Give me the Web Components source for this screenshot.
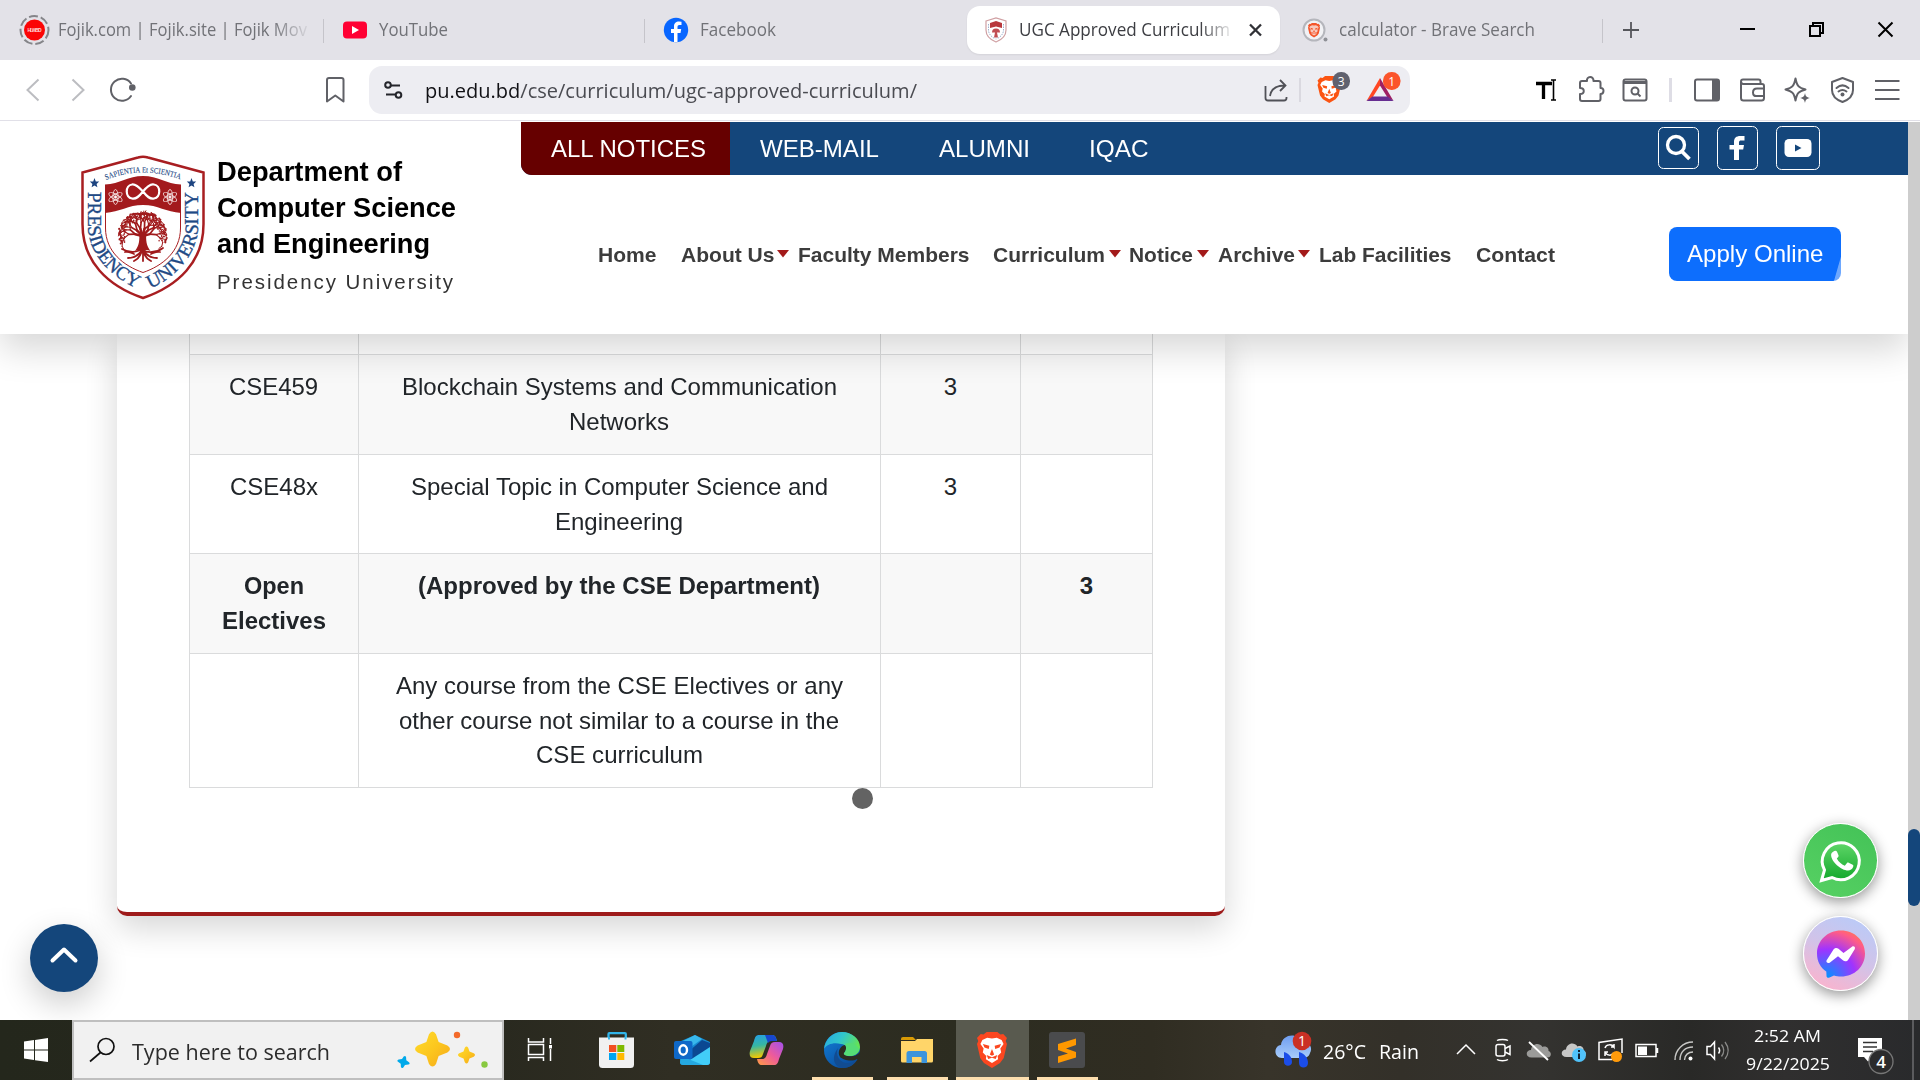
<!DOCTYPE html>
<html lang="en">
<head>
<meta charset="utf-8">
<title>UGC Approved Curriculum</title>
<style>
html,body{margin:0;width:1920px;height:1080px;overflow:hidden;background:#fff}
</style>
</head>
<body>
<desktop-screen></desktop-screen>
<script>
const UI = '"Open Sans","Noto Sans",sans-serif';
const BASE = `*{box-sizing:border-box}:host{display:block}svg{display:block;overflow:visible}.row{display:flex;align-items:center}.row>*{flex:none}`;

class Base extends HTMLElement {
  connectedCallback() {
    if (this.shadowRoot) return;
    this.attachShadow({ mode: 'open' }).innerHTML = `<style>${BASE}${this.css()}</style>${this.html()}`;
  }
  css() { return ''; }
  html() { return '<slot></slot>'; }
}
const define = (n, css, html) => customElements.define(n, class extends Base { css() { return css; } html() { return html(); } });

/* One line of text condensed or widened to a set width */
customElements.define('fit-text', class extends HTMLElement {
  connectedCallback() {
    if (this.shadowRoot) return;
    const w = +this.getAttribute('w');
    const r = this.attachShadow({ mode: 'open' });
    r.innerHTML = `<style>:host{display:block;white-space:nowrap;width:${w}px}span{display:inline-block;transform-origin:0 50%}</style><span><slot></slot></span>`;
    const s = r.querySelector('span');
    s.style.transform = `scaleX(${w / s.getBoundingClientRect().width})`;
  }
});

/* Row helpers: each item is [start, width, markup]; gaps become margins */
const row = (start, items) => { let c = start; return items.map(([x, w, m]) => { const g = x - c; c = x + w; return `<div style="margin-left:${g}px;width:${w}px">${m}</div>`; }).join(''); };
const icons = (top, h) => (x, w, inner, attr = '') => [x, w, `<svg width="${w}" height="${h}" viewBox="${x} ${top} ${w} ${h}" fill="none" ${attr}>${inner}</svg>`];
const text = (x, w, t, style = '') => [x, w, `<fit-text w="${w}" style="${style}">${t}</fit-text>`];

const LION = (c1, face) => `<path d="M6 2.5 9 0h10l3 2.5 2.5-.4L28 6l-1.2 3L28 12l-3 14-3.500 5L14 36l-7.500-5L3 26 0 12l1.200-3L0 6l3.500-3.900Z" fill="${c1}"/><path d="M14 6.500 18.500 5.800 23 8l1.800 4-3 4.500.8 4-3.300 3.500.4 3.200L14 31l-5.700-3.800.4-3.200-3.300-3.500.8-4-3-4.500L5 8l4.500-2.200Z" fill="${face}"/><path d="m5.500 12 6 1.800L11 17l-4-1.500ZM22.500 12l-6 1.800.5 3.200 4-1.500ZM14 17l-2 5.500 2 1.200 2-1.200ZM9 23l5 2.200 5-2.200-1.500 4L14 25.800 10.500 27Z" fill="${c1}"/>`;
const SHIELDLET = (x, y, s) => `<g transform="translate(${x} ${y}) scale(${s})"><path d="M0 3 10 0 20 3v9c0 6-5 10-10 12C5 22 0 18 0 12Z" fill="#fff" stroke="#d0a0a3" stroke-width="1.200"/><path d="M4 5l6-2 6 2v5l-6-1.500L4 10Z" fill="#b8383d"/><path d="M10 10.500a4 4 0 0 1 4 4h-3l1 5H8l1-5H6a4 4 0 0 1 4-4Z" fill="#c04e54"/><path d="M2.500 6v6c0 4 3 7 7 9" stroke="#9fb1cf" stroke-width="1" stroke-dasharray="1.500 1"/><path d="M17.500 6v6c0 4-3 7-7 9" stroke="#9fb1cf" stroke-width="1" stroke-dasharray="1.500 1"/></g>`;

/* ---------- browser tabs ---------- */
define('tab-strip', `:host{height:60px;background:#e3e2e8;font:18px ${UI};color:#717277}.row{height:60px}fit-text{margin-top:-2px}
.active{height:48px;width:313px;background:#fff;border-radius:13px;color:#3c3d42;box-shadow:0 1px 2px #0001;display:flex;align-items:center}.active>*{flex:none}`, () => {
  const ic = icons(0, 60), ia = icons(6, 48);
  const sep = x => ic(x, 1, `<path d="M${x + .5} 19v24" stroke="#c5c4ca"/>`);
  const fade = '-webkit-mask-image:linear-gradient(90deg,#000 86%,#0002);mask-image:linear-gradient(90deg,#000 86%,#0002)';
  const left = row(0, [
    ic(19, 31, `<circle cx="34.500" cy="30" r="14" stroke="#858589" stroke-width="2" stroke-dasharray="9 3"/><circle cx="34.500" cy="30" r="10.500" fill="#fb0505"/><text x="27.500" y="32" font-size="5" font-weight="700" fill="#ffd5d5" font-family="Liberation Sans" textLength="14">HLWBD</text>`),
    text(58, 249, 'Fojik.com | Fojik.site | Fojik Mov', fade),
    sep(323),
    ic(343, 24, `<rect x="343" y="21.500" width="24" height="17" rx="4" fill="#ff0033"/><path d="m352 26 7 4-7 4Z" fill="#fff"/>`),
    text(379, 69, 'YouTube'), sep(644),
    ic(664, 25, `<circle cx="676" cy="30" r="12.200" fill="#0866ff"/><path d="M674 42v-9h-3v-4h3v-2.500c0-3.500 2-5 5-5l2.500.2v3.300h-2c-1.500 0-2 .8-2 2V29h3.700l-.7 4h-3v9Z" fill="#fff"/>`),
    text(700, 76, 'Facebook')]);
  const act = row(967, [ia(986, 20, SHIELDLET(986, 18, 1)), text(1019, 211, 'UGC Approved Curriculum', fade), ia(1248, 16, `<path d="m1250 24.500 11 11m0-11-11 11" stroke="#303136" stroke-width="2.300"/>`)]);
  const right = row(1280, [
    ic(1302, 26, `<circle cx="1314" cy="30" r="10.500" fill="#f2f2f5" stroke="#b5b6bc" stroke-width="2"/><circle cx="1325.500" cy="39.500" r="2" fill="#8f9096"/><g transform="translate(1308 23) scale(.43 .4)">${LION('#f4552a', '#f8c9bd')}</g>`),
    text(1339, 196, 'calculator - Brave Search'), sep(1602),
    ic(1622, 18, `<path d="M1631 22v16m-8-8h16" stroke="#55565b" stroke-width="1.800"/>`),
    ic(1739, 17, `<path d="M1740 29h15" stroke="#000" stroke-width="2"/>`),
    ic(1808, 18, `<path d="M1810 26h10v10h-10zM1813 26v-3h10v10h-3" stroke="#000" stroke-width="2"/>`),
    ic(1877, 18, `<path d="m1878.500 22.500 14 14m0-14-14 14" stroke="#000" stroke-width="2"/>`)]);
  return `<div class="row">${left}<div class="active" style="margin-left:191px">${act}</div>${right}</div>`;
});

/* ---------- browser toolbar ---------- */
define('tool-bar', `:host{height:62px;background:#fff;border-bottom:1px solid #fff;font:20px ${UI};color:#4a4b51;box-shadow:inset 0 -1px #e1e0e8}.row{height:60px}.url{height:48px;width:1041px;background:#ededf2;border-radius:13px;display:flex;align-items:center;margin-left:24px}.url>*{flex:none}b{font-weight:400;color:#101014}`, () => {
  const ic = icons(60, 60), iu = icons(66, 48), g = 'stroke="#606167" stroke-width="2" stroke-linecap="round" stroke-linejoin="round"';
  const left = row(0, [
    ic(26, 14, '<path d="M38.500 79.500 27.500 90l11 10.500" stroke="#bcbdc1" stroke-width="2"/>'),
    ic(71, 14, '<path d="m72.500 79.500 11 10.500-11 10.500" stroke="#bcbdc1" stroke-width="2"/>'),
    ic(110, 26, `<path d="M131 83.500A11 11 0 1 0 131 96" ${g} stroke-width="2.200"/><circle cx="132.300" cy="87.500" r="3.300" fill="#606167"/>`),
    ic(325, 20, `<path d="M327 80q0-2 2-2h12.500q2 0 2 2v21.500l-8.200-6-8.300 6Z" ${g}/>`)]);
  const url = row(369, [
    iu(384, 20, '<g stroke="#24252b" stroke-width="2"><circle cx="388" cy="85" r="2.800"/><path d="M391 85.500h9M386 94.500h9"/><circle cx="398.500" cy="95" r="2.800"/></g>'),
    text(425, 492, '<b>pu.edu.bd</b>/cse/curriculum/ugc-approved-curriculum/'),
    iu(1264, 24, `<path d="M1265.500 86v12q0 2.500 2.500 2.500h16q2.500 0 2.500-2.500v-1M1270 96c1-7 6-10.500 15-10.500m-5-5.500 5.500 5.500-5.500 5.500" stroke="#505157" stroke-width="1.800"/>`),
    iu(1299, 2, '<path d="M1300 78v24" stroke="#cfced6" stroke-width="1.300"/>'),
    iu(1317, 34, `<g transform="translate(1317.500 76) scale(.84 .75)">${LION('#fb5412', '#fff')}</g><rect x="1332.500" y="72" width="17.500" height="18" rx="8.500" fill="#60616e"/><text x="1341.200" y="85.500" font-size="12" fill="#fff" text-anchor="middle" font-family="Open Sans">3</text>`),
    iu(1366, 35, '<path d="m1380 78-13.500 23 6-3.500 7.500-12Z" fill="#ff4724"/><path d="m1380 78 13.500 23-6-3.500-7.500-12Z" fill="#9e1f63"/><path d="M1366.500 101h27l-6-4.500h-15Z" fill="#662d91"/><rect x="1383" y="72" width="17.500" height="18" rx="8.500" fill="#fb542b"/><text x="1391.700" y="85.500" font-size="12" fill="#fff" text-anchor="middle" font-family="Open Sans">1</text>')]);
  const right = row(1410, [
    ic(1535, 22, '<path d="M1536 83.500h16M1543.500 83v16" stroke="#000" stroke-width="3.300"/><path d="M1553.500 80v20m-2.500-20h5m-5 20h5" stroke="#000" stroke-width="1.600"/>'),
    ic(1578, 26, `<path d="M1580 83q0-2 2-2h5c-1-5 7-5.500 6.500 0h5q2 0 2 2v5c4-.500 4 6 0 6v5q0 2-2 2h-16.500q-2 0-2-2v-5c5 0 5-6 0-6Z" ${g}/>`),
    ic(1622, 26, `<rect x="1623.500" y="79.500" width="23" height="21" rx="2" ${g}/><path d="M1623 82.500h24" stroke="#606167" stroke-width="3"/><circle cx="1635" cy="91" r="3.500" stroke="#606167" stroke-width="2"/><path d="m1637.500 93.500 3 3" stroke="#606167" stroke-width="2"/>`),
    ic(1669, 3, '<path d="M1670.500 78v24" stroke="#dedde5" stroke-width="3"/>'),
    ic(1694, 26, `<rect x="1695" y="79.500" width="24" height="21" rx="2" ${g}/><path d="M1712 79h7v22h-7Z" fill="#606167"/>`),
    ic(1739, 27, `<path d="M1741 82v16q0 2.500 2.500 2.500h18q2.500 0 2.500-2.500V86q0-2-2-2h-19q-2-.5-2-2.500 0-2 2-2h15.500q2 0 2 2V84M1764 88.500h-7q-4 0-4 4t4 3.500h7" ${g}/>`),
    ic(1784, 28, `<path d="M1795.500 78.500c1.500 7.500 3 9 10 11-7 2-8.500 3.500-10 11-1.500-7.500-3-9-10-11 7-2 8.500-3.500 10-11Z" ${g}/><path d="M1805 93c.8 3.500 1.500 4.200 5 5-3.500.8-4.200 1.500-5 5-.8-3.500-1.500-4.200-5-5 3.500-.8 4.200-1.500 5-5Z" fill="#606167"/>`),
    ic(1830, 25, `<path d="m1842.500 78 10.500 4v8c0 6-5 10-10.500 12-5.500-2-10.500-6-10.500-12v-8Z" ${g}/><path d="M1836.500 88c4-3.500 8-3.500 12 0M1838.500 91.500c2.800-2.200 5.200-2.200 8 0" ${g} stroke-width="1.800"/><circle cx="1842.500" cy="94.500" r="2" fill="#606167"/>`),
    ic(1874, 26, `<path d="M1875 81h24.500m-24.500 9h24.500m-24.500 9h24.500" stroke="#606167" stroke-width="2"/>`)]);
  return `<div class="row">${left}<div class="url">${url}</div>${right}</div>`;
});

/* ---------- university crest ---------- */
function tree() {
  let s = 7; const rnd = () => (s = (s * 16807) % 2147483647) / 2147483647;
  let out = '';
  const grow = (x, y, a, len, w, d) => {
    const nx = x + Math.cos(a) * len, ny = y + Math.sin(a) * len;
    if (Math.hypot(nx - 142.500, ny - 235) > 24.500) return;
    out += `<path d="M${x.toFixed(1)} ${y.toFixed(1)}L${nx.toFixed(1)} ${ny.toFixed(1)}" stroke-width="${w}"/>`;
    if (d > 0) { grow(nx, ny, a - .25 - rnd() * .5, len * .86, Math.max(1, w * .68), d - 1); grow(nx, ny, a + .25 + rnd() * .5, len * .86, Math.max(1, w * .68), d - 1); }
  };
  [-2.900, -2.350, -1.850, -1.300, -.800, -.250].forEach(a => grow(142.500, 236, a, 7.500, 2.500, 5));
  let leaves = '';
  for (let ring = 0; ring < 2; ring++) for (let i = 0; i < 60; i++) { const a = Math.PI * (.9 + i / 60 * 1.200), r = (ring ? 17 : 21) + rnd() * 3.500; leaves += `<circle cx="${(142.500 + Math.cos(a) * r).toFixed(1)}" cy="${(236.500 + Math.sin(a) * r).toFixed(1)}" r="${ring ? .8 : 1.100}"/>`; }
  return `<g stroke="#a01a1c" stroke-linecap="round" fill="none">${out}<path d="M142 248c-4 5-13 5-20 1m20 1c-3 5-8 8-14 8m14-8c-1 5-4 9-8 11m9-11v11m0-11c1 5 4 9 8 11m-8-11c3 5 8 8 14 8m-14-8c4 3 13 3 20-2M134 254c-3-1-5-3-9-2m26 2c3-1 5-3 9-2" stroke-width="1.800"/></g><g fill="#a01a1c">${leaves}</g><path d="M139 232h7.500c-1 8 0 14 4 19-5-2-6-1-7.500 1-1-2-2-3-8-1 4-5 5-11 4-19Z" fill="#a01a1c"/>`;
}
const atom = (x, y) => `<g stroke="#f3dcdc" stroke-width=".9" transform="translate(${x} ${y})"><ellipse rx="7.500" ry="2.600" transform="rotate(90)"/><ellipse rx="7.500" ry="2.600" transform="rotate(30)"/><ellipse rx="7.500" ry="2.600" transform="rotate(150)"/><circle r="1.200" fill="#fff"/></g>`;
const star = (x, y) => `<path transform="translate(${x} ${y})" d="m0-5 1.300 3.400 3.400.2-2.600 2.300.8 3.400L0 2.600l-2.900 1.700.8-3.400-2.600-2.300 3.400-.2Z" fill="#1d4480"/>`;
define('uni-crest', ':host{width:124px;height:212px}', () => `<svg width="124" height="212" viewBox="81 122 124 212" fill="none">
<path d="M138 157.500Q143 156 148 157.500L203.500 172.500V224C203.500 262 178 286 143 298 108 286 82.500 262 82.500 224V172.500Z" fill="#fff" stroke="#a81e21" stroke-width="2.500"/>
<path d="M105.500 187V228C105.500 252 124 266 143 272.500 162 266 180.500 252 180.500 228V187" stroke="#a81e21" stroke-width="1"/>
<path d="M105 184.500C120 184 128 176 143 176S166 184 181 184.500V213C166 212 158 205 143 205S120 212 105 213Z" fill="#a31a1d"/>
<path d="M143 191.500C137 185 134 184 132 184.500c-7 1-7 13 0 14 4 1 7-2 11-7s8-8 11-7c7 1 7 13 0 14-4 1-7-2-11-7Z" stroke="#fff" stroke-width="2.200"/>
${atom(115.500, 197)}${atom(170, 197)}${star(94.500, 183)}${star(191.500, 183)}${tree()}
<path id="a" d="M87.500 192V222C87.500 252 108 277 141 290"/><path id="b" d="M150 288.500C178 277 198.500 252 198.500 222V191"/><path id="c" d="M106 180Q124 172.500 143 172.500T182 180"/>
<g font-family="Liberation Serif" fill="#1f4a85" stroke="#1f4a85" stroke-width=".35"><text font-size="19" lengthAdjust="spacingAndGlyphs" textLength="117"><textPath href="#a" lengthAdjust="spacingAndGlyphs" textLength="117">PRESIDENCY</textPath></text><text font-size="19" lengthAdjust="spacingAndGlyphs" textLength="117"><textPath href="#b" lengthAdjust="spacingAndGlyphs" textLength="117">UNIVERSITY</textPath></text><text font-size="8" stroke-width=".1" lengthAdjust="spacingAndGlyphs" textLength="76"><textPath href="#c" lengthAdjust="spacingAndGlyphs" textLength="76">SAPIENTIA Et SCIENTIA</textPath></text></g></svg>`);

/* ---------- site header ---------- */
define('site-header', `:host{display:flex;width:1908px;height:212px;background:#fff;position:relative;z-index:2;box-shadow:0 15px 34px rgba(0,0,0,.16);font-family:"Liberation Sans",Arial,sans-serif}
.brand{width:521px;padding-left:81px;display:flex;flex:none}.name{margin:32px 0 0 12.400px;color:#000;font:700 28px/36px "Liberation Sans"}.name .sub{font-weight:400;font-size:21px;letter-spacing:2px;color:#333;margin-top:2px}
.right{flex:none;width:1387px}.top{height:53px;background:#14467b;border-bottom-left-radius:11px;overflow:hidden;font-size:24px;color:#fff}.all{width:209px;height:53px;background:#660000;padding-left:30px;display:flex;align-items:center}
.nav{height:159px;font-weight:700;font-size:21px;color:#3c3c3c}.apply{width:172px;height:54px;margin-top:-1.500px;border-radius:8px;background:linear-gradient(106deg,#0d6efd 96%,#6ea8fe 96.500%);display:flex;align-items:center;padding-left:18px;color:#fff;font-weight:400;font-size:24px}`, () => {
  const ic = icons(122, 53), ar = icons(175, 159);
  const c = x => ar(x, 12, `<path d="M${x} 250h12l-6 7.500Z" fill="#a31a1a"/>`);
  const box = (x, y, w, h) => `<rect x="${x}.5" y="${y}.5" width="${w}" height="${h}" rx="5" stroke="#fff"/>`;
  return `<div class="brand"><uni-crest></uni-crest><div class="name"><fit-text w="185">Department of</fit-text><fit-text w="239">Computer Science</fit-text><fit-text w="213">and Engineering</fit-text><fit-text w="238" class="sub">Presidency University</fit-text></div></div>
<div class="right"><div class="row top"><div class="all"><fit-text w="155">ALL NOTICES</fit-text></div>${row(730, [
    text(760, 119, 'WEB-MAIL'), text(939, 91, 'ALUMNI'), text(1089, 59.500, 'IQAC'),
    ic(1658, 42, box(1658, 127, 40, 41) + '<circle cx="1676" cy="145" r="8.500" stroke="#fff" stroke-width="3.300"/><path d="m1682 151.500 7.500 7.500" stroke="#fff" stroke-width="3.800"/>'),
    ic(1717, 42, box(1717, 126, 40, 43) + '<path d="M1734 160v-10.500h-4.500V145h4.500v-3c0-4 2-6 6.500-6h4v4.500h-3c-2 0-2.500.5-2.500 2.500v2h5l-.8 4.500h-4.200V160Z" fill="#fff"/>'),
    ic(1776, 44, box(1776, 126, 43, 43) + '<rect x="1784.500" y="139" width="27" height="18" rx="4.500" fill="#fff"/><path d="m1795 144.500 6.500 3.500-6.500 3.500Z" fill="#14467b"/>')])}</div>
<div class="row nav">${row(521, [text(598, 58.500, 'Home'), text(680.600, 93.500, 'About Us'), c(777), text(798, 171.500, 'Faculty Members'), text(993.500, 112, 'Curriculum'), c(1109), text(1129.500, 64, 'Notice'), c(1197), text(1217.600, 77, 'Archive'), c(1298), text(1319, 132.500, 'Lab Facilities'), text(1475.600, 79, 'Contact'),
    [1669, 172, '<div class="apply"><fit-text w="136.500">Apply Online</fit-text></div>']])}</div></div>`;
});

/* ---------- curriculum table ---------- */
define('course-table', `:host{display:block;width:964px;font:24px/34.500px "Liberation Sans",Arial,sans-serif;color:#212529}fit-text{margin-left:-1px}
.r{display:grid;grid-template-columns:169px 522px 140px 132px;border-left:1px solid #dadbdc;text-align:center}.r>div{border-right:1px solid #dadbdc;border-bottom:1px solid #dadbdc;padding-top:15px;display:flex;flex-direction:column;align-items:center}.s{background:#f8f8f8}.b{font-weight:700}`, () => {
  const rows = [[21, '', '', '', '', ''], [100, 's', [['CSE459', 89]], [['Blockchain Systems and Communication', 435], ['Networks', 100]], '3', ''],
    [99, '', [['CSE48x', 88]], [['Special Topic in Computer Science and', 417], ['Engineering', 128]], '3', ''],
    [100, 's b', [['Open', 60], ['Electives', 104]], [['(Approved by the CSE Department)', 402]], '', '3'],
    [134, '', '', [['Any course from the CSE Electives or any', 447], ['other course not similar to a course in the', 440], ['CSE curriculum', 167]], '', '']];
  const f = a => a ? a.map(([t, w]) => `<fit-text w="${w}">${t}</fit-text>`).join('') : '';
  return rows.map(([h, c, a, b, d, e]) => `<div class="r ${c}" style="height:${h}px"><div>${f(a)}</div><div>${f(b)}</div><div>${d}</div><div>${e}</div></div>`).join('');
});
define('content-card', `:host{width:1108px;height:582px;margin-left:117px;padding-left:72px;background:#fff;border-bottom:4px solid #9e1b1b;border-radius:0 0 10px 10px;box-shadow:0 12px 32px rgba(0,0,0,.165)}`, () => '<slot></slot>');

define('round-button', `:host{position:absolute;border-radius:50%;z-index:3}`, () => '<slot></slot>');

define('page-scrollbar', `:host{width:12px;height:898px;background:#cdcdcd;padding-top:707px;position:relative;z-index:3}div{height:77px;background:#14467b;border-radius:6px}`, () => '<div></div>');

define('web-page', `:host{display:flex;height:898px;width:1920px;position:relative;overflow:hidden;background:#fff}.view{width:1908px;height:898px;overflow:hidden}`, () => `<div class="view"><site-header></site-header><content-card><course-table></course-table></content-card></div><page-scrollbar></page-scrollbar>
<round-button style="left:30px;top:802px;width:68px;height:68px;background:#14467b;box-shadow:0 12px 32px rgba(0,0,0,.2)"><svg width="68" height="68" fill="none"><path d="m22.500 36.500 11.500-11 11.500 11" stroke="#fff" stroke-width="4" stroke-linecap="round" stroke-linejoin="round"/></svg></round-button>
<round-button style="left:852.300px;top:666.300px;width:21px;height:21px;background:#636363"></round-button>
<round-button style="left:1803px;top:701px;width:75px;height:75px;border:1.500px solid #fff;background:linear-gradient(30deg,#57d163,#43c257);box-shadow:0 4px 14px rgba(0,0,0,.42)"><svg width="72" height="72" viewBox="0 0 72 72" fill="none"><defs><linearGradient id="w" x2="0" y2="1"><stop stop-color="#5fd668"/><stop offset="1" stop-color="#12a82c"/></linearGradient></defs><path d="M17.500 56.500 20.500 46A18.500 18.500 0 1 1 28 53.500Z" fill="url(#w)" stroke="#fff" stroke-width="3"/><path d="M29.500 27.500c1-1 3-1 3.500.2l1.500 3.500c.3 1-.2 1.700-1.700 3.300 2 3.500 4.500 5.700 8 7.200l2.200-2.700c.5-.6 1-.6 1.700-.3l4 2c.8.5.8 1 .4 2.300-.7 2.300-3 3.500-5 3.500-7 0-17-9-17-15.500 0-1.500.8-2.700 2.400-3.500Z" fill="#fff"/></svg></round-button>
<round-button style="left:1803px;top:794px;width:75px;height:75px;border:1.500px solid #fff;background:linear-gradient(25deg,#fbb3cd 8%,#d2c3e8 50%,#b5ccfb);box-shadow:0 4px 14px rgba(0,0,0,.42)"><svg width="72" height="72" viewBox="0 0 72 72" fill="none"><defs><radialGradient id="m" cx=".2" cy="1" r="1.100"><stop stop-color="#0095ff"/><stop offset=".55" stop-color="#a033ff"/><stop offset=".9" stop-color="#ff5c87"/><stop offset="1" stop-color="#ff7061"/></radialGradient></defs><path d="M37 13.500c13.500 0 24 10 24 23s-10.500 23-24 23c-2.500 0-5-.3-7-1l-4.500 2c-1.500.6-3 0-3-1.800l-.2-4.200C16.500 50.500 13 44.500 13 36.500c0-13 10.500-23 24-23Z" fill="url(#m)"/><path d="m22.500 43.500 7-11c1.200-1.800 3.400-2 5-.8l5 4.300 8.500-6.300c1.600-1 3.800.2 2.700 2.500l-6.500 10.500c-1.200 1.800-3.500 2-5 .8l-5.200-4.300-8 6.200c-1.800 1.200-4.200.2-3.500-1.900Z" fill="#fff"/></svg></round-button>`);

/* ---------- taskbar ---------- */
define('task-bar', `:host{height:60px;width:1920px;font:20px ${UI};color:#fff;background:linear-gradient(90deg,#24271c 0,#29291f 26%,#302e23 35%,#2c2c20 50%,#302d22 60%,#38342a 66%,#333029 73%,#343330 80%,#292927 88%,#302f2f 93%,#292a2c 100%)}.row{height:60px}
.search{width:432px;height:60px;border:2px solid #bfbfbf;background:#f1f1f1;margin-left:24px;display:flex;align-items:center;color:#2c2c2c;font-size:22px}.search>*{flex:none}.search fit-text{padding-top:1px}
.clock{font-size:17px;line-height:28px;display:flex;flex-direction:column;align-items:center}`, () => {
  const ic = icons(1020, 60), is = icons(1022, 56);
  const under = (x, w) => `<path d="M${x} 1078.500h${w}" stroke="#fddfae" stroke-width="3"/>`;
  const L = 'stroke="#fff" stroke-width="1.500"';
  const sp = (x, y, r, c) => `<path transform="translate(${x} ${y}) scale(${r})" d="M-.2-.85Q0-1.150.2-.85L.35-.4.85-.2Q1.150 0 .85.2L.35.4.2.85Q0 1.150-.2.85L-.35.4-.85.2Q-1.150 0-.85-.2L-.35-.4Z" fill="${c}"/>`;
  const cloud = (x, y, c) => `<path transform="translate(${x} ${y})" d="M5 16C-1.500 16-1 8.500 4.500 8.500 5 3 12 0 16 5.500 20 4 22.500 7 22 9.500c3.500 1 3 6.500-1 6.500Z" fill="${c}"/>`;
  return `<div class="row">${row(0, [ic(24, 24, '<path d="m24 1041.500 10-1.500v9.500H24ZM35 1040l13-2v11.500H35ZM24 1050.500h10v9.500l-10-1.500ZM35 1050.500h13v11.500l-13-1.800Z" fill="#fff"/>')])}
<div class="search">${row(74, [
    is(89, 26, '<circle cx="106" cy="1046.500" r="8" stroke="#111" stroke-width="1.700"/><path d="m100.500 1052.500-10.500 9" stroke="#111" stroke-width="1.700"/>'),
    text(132, 198, 'Type here to search'),
    is(396, 94, '<defs><linearGradient id="y" x2="1" y2="1"><stop stop-color="#ffdc2e"/><stop offset=".5" stop-color="#fcc71e"/><stop offset="1" stop-color="#f5a81c"/></linearGradient></defs>' + `<g transform="rotate(15 403.500 1062)">${sp(403.500, 1062, 6.300, '#00a9ea')}</g>` + sp(432.500, 1049, 17.500, 'url(#y)') + sp(466.500, 1055, 8.500, 'url(#y)') + '<circle cx="457" cy="1035" r="3.200" fill="#f36a2b"/><circle cx="484.500" cy="1064.500" r="3.200" fill="#88c940"/>')])}</div>
${row(504, [
    ic(527, 26, `<path d="M528.500 1038v4h15v-4M528.500 1044.500h15v10h-15ZM528.500 1061v-3.500h15v3.500M550.500 1038v6M550.500 1049v12" ${L}/><path d="M549 1045h3v3.500h-3Z" fill="#fff"/>`),
    ic(599, 35, '<path d="M608.500 1041v-7q0-.8.8-.8H625q.8 0 .8.8v7" stroke="#32b5ea" stroke-width="2.300"/><path d="M599 1037.500h35v27q0 3.500-3.500 3.500h-28q-3.500 0-3.500-3.500Z" fill="#f1f1f1"/><path d="M609 1037v2.500m16.500-2.500v2.500" stroke="#32b5ea" stroke-width="2"/><path d="M609 1045h7.300v7H609Z" fill="#f25022"/><path d="M617.300 1045h7v7h-7Z" fill="#7fba00"/><path d="M609 1053h7.300v7H609Z" fill="#00a4ef"/><path d="M617.300 1053h7v7h-7Z" fill="#ffb900"/>'),
    ic(674, 36, '<path d="m681 1041 14-6 15 7v20q0 3-3 3h-24q-3 0-3-3Z" fill="#168ad1"/><path d="m681 1042 14-7 7 4-14 10Z" fill="#38b8ec"/><path d="m688 1052 14-12 8 3v5l-17 11-5-1Z" fill="#0b4892"/><path d="M690 1060 710 1047v15q0 3-3 3h-23Z" fill="#42cdf8"/><path d="m681 1056 22 9h-20q-3 0-3-3Z" fill="#25a8e1"/><rect x="674" y="1041" width="18.500" height="18" rx="2" fill="#0f68c8"/><ellipse cx="683.200" cy="1050" rx="3.800" ry="4.700" stroke="#fff" stroke-width="2.400"/>'),
    ic(749, 35, '<defs><linearGradient id="c1" x2=".2" y2="1"><stop stop-color="#249ee8"/><stop offset=".5" stop-color="#36b7a3"/><stop offset="1" stop-color="#f4c900"/></linearGradient><linearGradient id="c2" x1="1" x2="0" y2="1"><stop stop-color="#a150ef"/><stop offset=".5" stop-color="#ee5b9a"/><stop offset="1" stop-color="#ff9d43"/></linearGradient></defs><path d="M759 1035h13c3 0 4 2 5 6h-6c-3 0-4 1.500-5 5l-3 8c-1 3-2 4-5 4h-4c-4 0-5-3-4-7l4-10c1-4 2-6 5-6Z" fill="url(#c1)"/><path d="M765 1035h7c3 0 4 2 5 6h-5q-3 0-4 2Z" fill="#1747cf"/><path d="M774 1065h-12c-3 0-4-2-5-6h5c3 0 4-1.500 5-5l3-8c1-3 2-4 5-4h4c4 0 5 3 4 7l-4 10c-1 4-2 6-5 6Z" fill="url(#c2)"/>'),
    ic(812, 61, under(812, 61) + '<defs><linearGradient id="e1" x2="1" y2=".4"><stop stop-color="#27a7e0"/><stop offset=".5" stop-color="#31c6cd"/><stop offset="1" stop-color="#63e357"/></linearGradient><linearGradient id="e2" x2=".8" y2="1"><stop stop-color="#1280da"/><stop offset="1" stop-color="#0a4998"/></linearGradient></defs><circle cx="842" cy="1050" r="18" fill="url(#e2)"/><path d="M824 1049c1-10 9-17 18-17 10 0 18 7 18 15 0 6-5 9-10 9-4 0-6-1.500-5-3 3-4 1-9-4-9-7-2-14 0-17 5Z" fill="url(#e1)"/><path d="M838 1048c-3 8 2 14 8 15 4 .5 7 0 11-3-3 5-8 8-14 8-8-1-13-9-5-20Z" fill="#124c91"/><path d="M845 1045c2 3 1 6-1 8 0 2 4 4 9 3 3 0 5-2 7-4v9l-3-2c-5 3-14 1-17-2-3-5 0-11 5-12Z" fill="#2c2c20"/><path d="M845 1044c7-3 12 2 14 5-2 5-5 7-9 7-4 0-7-1-6-3 2-2 3-6 1-9Z" fill="#55dc76"/>'),
    ic(887, 61, under(887, 61) + '<path d="M901 1039q0-2 2-2h10l3 3h-15Z" fill="#d89a05"/><path d="M901 1041h14l2-2h16v22q0 1.500-1.500 1.500h-29q-1.500 0-1.500-1.500Z" fill="#ffd569"/><path d="M906.500 1063v-9.500q0-2.500 2.500-2.500h15.500q2.500 0 2.500 2.500v9.500h-5.500v-6h-9.500v6Z" fill="#3b94dc"/>'),
    ic(956, 73, `<path d="M956 1020h73v60h-73Z" fill="#595a4f"/>${under(956, 73)}<g transform="translate(977 1032) scale(1.070 1)">${LION('#fb4720', '#fff')}</g>`),
    ic(1037, 61, under(1037, 61) + '<rect x="1049" y="1032" width="36" height="36" rx="3" fill="#4a4b4d"/><path d="m1058 1044 18-5.500v6.500l-10 3.500 10 3.500v5.500l-18 5.500v-6.500l10-3-10-3.500Z" fill="#ff9800"/>'),
    ic(1275, 38, '<defs><linearGradient id="k" x2="0" y2="1"><stop stop-color="#6f9df0"/><stop offset="1" stop-color="#a7ccfa"/></linearGradient></defs><path d="M1282 1058c-8 0-9-12-1-13 1-11 17-13 20-3 9-1 12 6 9 11-1 4-4 5-8 5Z" fill="url(#k)"/><path d="M1284 1052c6 2 8 6 8 10 0 5-8 5-8 0Zm15 0c6 2 9 6 9 11 0 6-9 6-9 0Z" fill="#1b4de8"/><circle cx="1302" cy="1041" r="9.300" fill="#ca3025"/><text x="1302" y="1046" font-size="14" fill="#fff" text-anchor="middle" font-family="Open Sans">1</text>'),
    text(1323, 43, '26°C', 'padding-top:2px'), text(1379, 40, 'Rain', 'padding-top:2px'),
    ic(1456, 20, `<path d="m1457 1054 9-9 9 9" ${L}/>`),
    ic(1494, 18, `<rect x="1496" y="1044.500" width="9" height="11.500" rx="2" ${L}/><path d="M1505 1048.500l5-2.500v8.500l-5-2.500M1497 1040.500c2-1.500 9-1.500 11 0M1497 1059.500c2 1.500 9 1.500 11 0" ${L}/>`),
    ic(1526, 26, cloud(1526.500, 1041.500, '#9b9b99') + '<path d="m1529 1042 19 18" stroke="#fff" stroke-width="1.800"/>'),
    ic(1562, 25, cloud(1561.500, 1041, '#c7c7c6') + '<circle cx="1579" cy="1055" r="7" fill="#50c2fa"/><path d="M1579 1050v2m0 1.500v5.500" stroke="#123" stroke-width="2"/>'),
    ic(1598, 25, `<path d="M1612 1059.500h-13v-17l23-3.500v14M1605 1048c1-4 7-4 9-1v-3m0 3h-3M1605 1052c2 4 7 4 8 1M1605 1056v-4h3" ${L}/><circle cx="1616.500" cy="1056.500" r="5.500" fill="#ff9b0b"/>`),
    ic(1634, 25, `<path d="M1636 1044.500h20v12h-20ZM1657.500 1048v5" ${L}/><path d="M1638 1046.500h9v8.500h-9Z" fill="#fff"/>`),
    ic(1674, 20, '<path d="M1675 1060c0-10 8-18 18-18M1680 1060c0-8 5-13 13-13M1684.500 1060c0-5 4-8 8.500-8" stroke="#c8c8c6" stroke-width="1.400"/><circle cx="1690.500" cy="1058.500" r="2" fill="#fff"/>'),
    ic(1706, 24, `<path d="M1707 1046.500h3.500l4-4.500v17l-4-4.500h-3.500Z" ${L}/><path d="M1718.500 1047.500c1.500 2 1.500 4 0 6" ${L}/><path d="M1721.500 1044.500c3 4 3 8 0 12M1725 1042c4.500 6 4.500 11 0 17" stroke="#8a8a88" stroke-width="1.300"/>`),
    [1746, 83, '<div class="clock"><fit-text w="67">2:52 AM</fit-text><fit-text w="84">9/22/2025</fit-text></div>'],
    ic(1858, 36, '<path d="M1858 1038h24v19h-10l-4 4.500-4-4.500h-6Z" fill="#fff"/><path d="M1863 1042.500h14m-14 4.500h14m-14 4.500h10" stroke="#333" stroke-width="1.300"/><circle cx="1881" cy="1061.500" r="12" fill="#2b2b2c" stroke="#777" stroke-width="1.300"/><text x="1881" y="1067.500" font-size="17" fill="#fff" text-anchor="middle" font-family="Open Sans" font-weight="600">4</text>'),
    ic(1912, 2, '<path d="M1913 1020v60" stroke="#77777a" stroke-width="1.300"/>')])}</div>`;
});

define('desktop-screen', ':host{display:flex;flex-direction:column;width:1920px;height:1080px}', () => '<tab-strip></tab-strip><tool-bar></tool-bar><web-page></web-page><task-bar></task-bar>');
</script>
</body>
</html>
